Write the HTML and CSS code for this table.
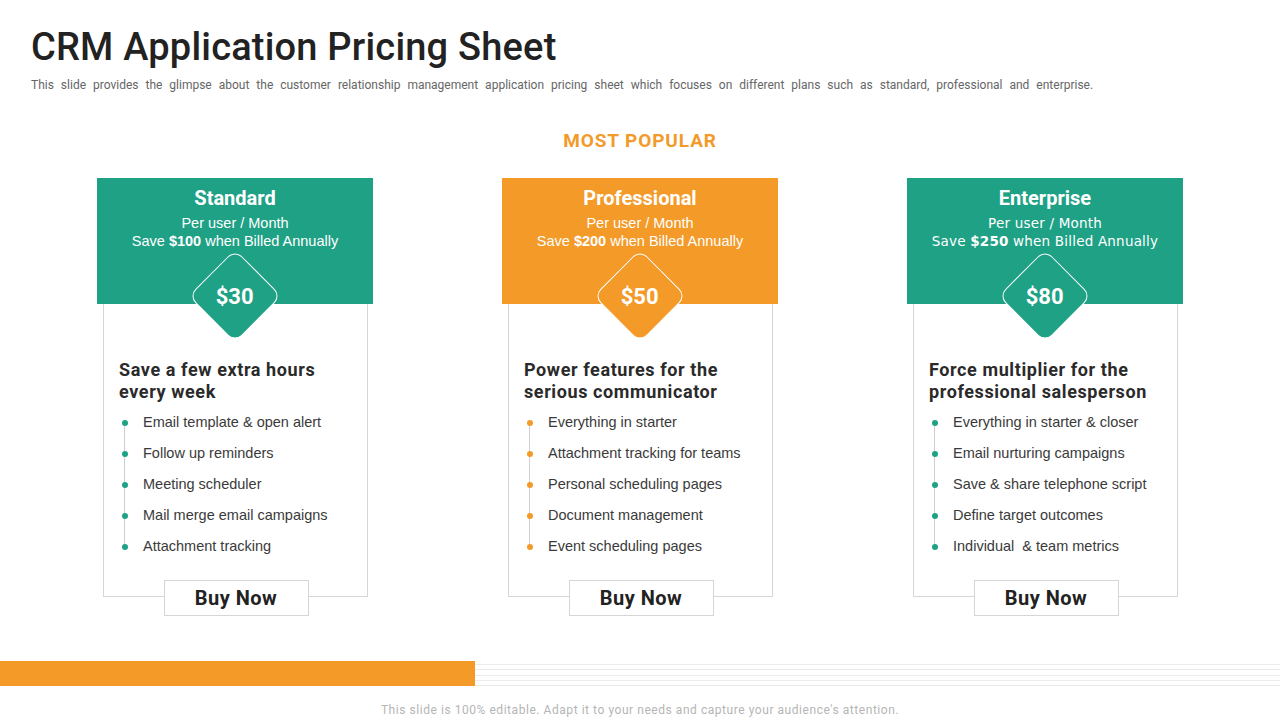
FILE: index.html
```html
<!DOCTYPE html>
<html>
<head>
<meta charset="utf-8">
<link rel="stylesheet" href="styles.css">
</head>
<body>
<div class="slide">
  <header class="top">
    <h1 class="title">CRM Application Pricing Sheet</h1>
    <p class="subtitle">This slide provides the glimpse about the customer relationship management application pricing sheet which focuses on different plans such as standard, professional and enterprise.</p>
  </header>

  <div class="popular">MOST POPULAR</div>

  <section class="plans">
    <article class="plan teal">
      <div class="plan-head">
        <h2 class="plan-name">Standard</h2>
        <div class="plan-sub">Per user / Month</div>
        <div class="plan-sub">Save <b>$100</b> when Billed Annually</div>
        <div class="price"><span class="price-text">$30</span></div>
      </div>
      <div class="plan-body">
        <h3 class="plan-title">Save a few extra hours every week</h3>
        <ul class="features">
          <li>Email template &amp; open alert</li>
          <li>Follow up reminders</li>
          <li>Meeting scheduler</li>
          <li>Mail merge email campaigns</li>
          <li>Attachment tracking</li>
        </ul>
        <div class="btn-row"><button class="buy">Buy Now</button></div>
      </div>
    </article>

    <article class="plan orange">
      <div class="plan-head">
        <h2 class="plan-name">Professional</h2>
        <div class="plan-sub">Per user / Month</div>
        <div class="plan-sub">Save <b>$200</b> when Billed Annually</div>
        <div class="price"><span class="price-text">$50</span></div>
      </div>
      <div class="plan-body">
        <h3 class="plan-title">Power features for the serious communicator</h3>
        <ul class="features">
          <li>Everything in starter</li>
          <li>Attachment tracking for teams</li>
          <li>Personal scheduling pages</li>
          <li>Document management</li>
          <li>Event scheduling pages</li>
        </ul>
        <div class="btn-row"><button class="buy">Buy Now</button></div>
      </div>
    </article>

    <article class="plan teal">
      <div class="plan-head">
        <h2 class="plan-name">Enterprise</h2>
        <div class="plan-sub alt">Per user / Month</div>
        <div class="plan-sub alt">Save <b>$250</b> when Billed Annually</div>
        <div class="price"><span class="price-text">$80</span></div>
      </div>
      <div class="plan-body">
        <h3 class="plan-title">Force multiplier for the professional salesperson</h3>
        <ul class="features">
          <li>Everything in starter &amp; closer</li>
          <li>Email nurturing campaigns</li>
          <li>Save &amp; share telephone script</li>
          <li>Define target outcomes</li>
          <li>Individual &nbsp;&amp; team metrics</li>
        </ul>
        <div class="btn-row"><button class="buy">Buy Now</button></div>
      </div>
    </article>
  </section>

  <div class="bottom-band">
    <div class="band-orange"></div>
    <div class="band-lines">
      <span></span><span></span><span></span><span></span><span></span>
    </div>
  </div>
  <p class="footer">This slide is 100% editable. Adapt it to your needs and capture your audience's attention.</p>
</div>
</body>
</html>
```

FILE: styles.css
```css
* { box-sizing: border-box; }
html, body { margin: 0; padding: 0; background: #fff; }
body {
  width: 1280px;
  height: 720px;
  overflow: hidden;
  font-family: "Liberation Sans", Arial, sans-serif;
  color: #333;
}
.slide {
  display: flex;
  flex-direction: column;
  height: 720px;
}
.top { padding: 24px 0 0 31px; }
.title {
  margin: 0;
  font-family: Roboto, "Liberation Sans", sans-serif;
  font-weight: 500;
  font-size: 38px;
  line-height: 46px;
  color: #222;
  letter-spacing: 0.2px;
}
.subtitle {
  margin: 8px 0 0;
  font-family: Roboto, "Liberation Sans", sans-serif;
  font-size: 12px;
  line-height: 14px;
  color: #666;
  word-spacing: 4px;
}
.popular {
  margin-top: 37px;
  text-align: center;
  font-family: Roboto, "Liberation Sans", sans-serif;
  font-weight: 700;
  font-size: 19px;
  line-height: 24px;
  color: #f29a2a;
  letter-spacing: 0.9px;
}
.plans {
  margin-top: 25px;
  display: flex;
  justify-content: center;
  gap: 129px;
}
.plan {
  width: 276px;
  display: flex;
  flex-direction: column;
}
.plan-head {
  position: relative;
  height: 126px;
  padding-top: 8px;
  text-align: center;
  color: #fff;
}
.teal .plan-head { background: #1fa185; }
.orange .plan-head { background: #f39a28; }
.plan-name {
  margin: 0 0 4px;
  font-family: Roboto, "Liberation Sans", sans-serif;
  font-weight: 700;
  font-size: 20px;
  line-height: 24px;
}
.plan-sub {
  font-size: 14.5px;
  line-height: 18px;
  color: #fff;
}
.plan-sub b { font-weight: 700; }
.plan-sub.alt {
  font-family: "DejaVu Sans", sans-serif;
  font-size: 13.5px;
  letter-spacing: 0.2px;
}
.price {
  position: absolute;
  left: 50%;
  top: 118px;
  width: 66px;
  height: 66px;
  margin-left: -33px;
  margin-top: -33px;
  border-radius: 10px;
  border: 1px solid #fff;
  transform: rotate(45deg);
  display: flex;
  align-items: center;
  justify-content: center;
  z-index: 2;
}
.teal .price { background: #1fa185; }
.orange .price { background: #f39a28; }
.price-text {
  transform: rotate(-45deg);
  font-family: Roboto, "Liberation Sans", sans-serif;
  font-weight: 700;
  font-size: 22px;
  color: #fff;
}
.plan-body {
  margin: 0 5px 0 6px;
  border: 1px solid #d6d6d6;
  border-top: none;
  height: 293px;
  padding: 55px 8px 0 15px;
  position: relative;
}
.plan-title {
  margin: 0;
  font-family: Roboto, "Liberation Sans", sans-serif;
  font-weight: 700;
  font-size: 18px;
  line-height: 22px;
  letter-spacing: 0.6px;
  color: #2a2a2a;
}
.features {
  list-style: none;
  margin: 4px 0 0;
  padding: 0;
  position: relative;
}
.features::before {
  content: "";
  position: absolute;
  left: 5px;
  top: 15px;
  bottom: 15px;
  width: 1px;
  background: #cfcfcf;
}
.features li {
  position: relative;
  height: 31px;
  line-height: 31px;
  padding-left: 24px;
  font-size: 14.5px;
  color: #3a3a3a;
}
.features li::before {
  content: "";
  position: absolute;
  left: 3px;
  top: 13px;
  width: 6px;
  height: 6px;
  border-radius: 50%;
}
.teal .features li::before { background: #1fa185; }
.orange .features li::before { background: #f39a28; }
.btn-row {
  position: absolute;
  left: 0;
  right: 0;
  bottom: -20px;
  display: flex;
  justify-content: center;
}
.buy {
  width: 145px;
  height: 36px;
  background: #fff;
  border: 1px solid #d6d6d6;
  font-family: Roboto, "Liberation Sans", sans-serif;
  font-weight: 700;
  font-size: 20px;
  letter-spacing: 0.5px;
  color: #222;
  padding: 0;
  margin-left: 1px;
}
.bottom-band {
  margin-top: 64px;
  display: flex;
  height: 25px;
}
.band-orange {
  width: 475px;
  background: #f39a28;
}
.band-lines {
  flex: 1;
  display: flex;
  flex-direction: column;
  justify-content: space-between;
  padding: 3px 0 0;
}
.band-lines span {
  height: 1px;
  background: #ececec;
}
.footer {
  margin: 17px 0 0;
  text-align: center;
  font-family: Roboto, "Liberation Sans", sans-serif;
  font-size: 12px;
  line-height: 14px;
  letter-spacing: 0.55px;
  color: #b5b5b5;
}
```
